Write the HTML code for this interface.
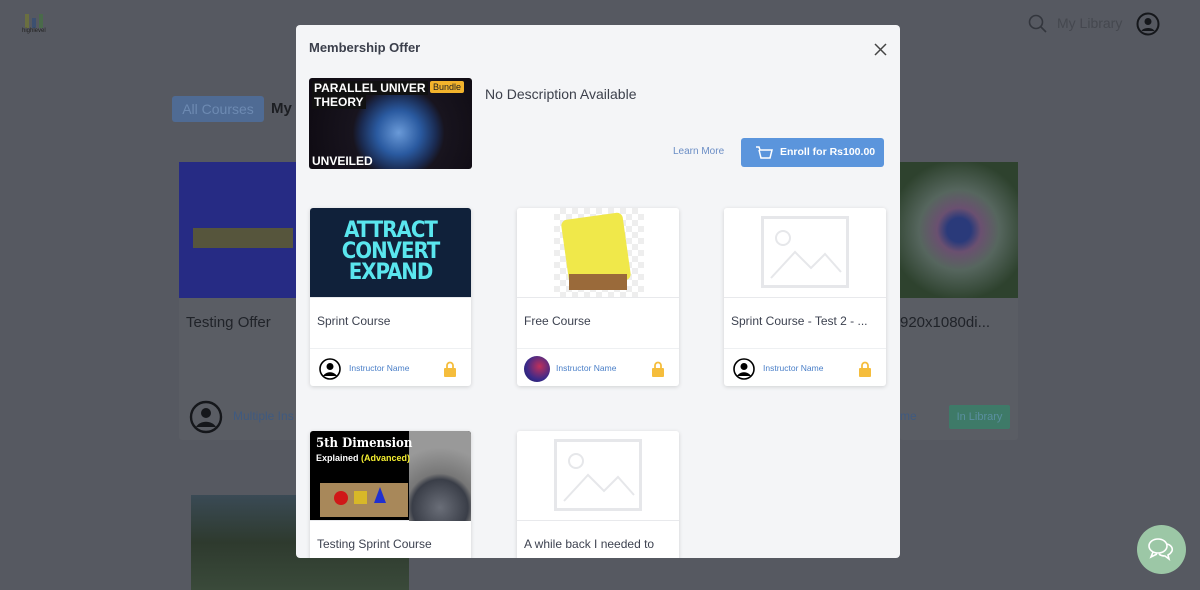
<!DOCTYPE html>
<html><head><style>
*{margin:0;padding:0;box-sizing:border-box}
body{width:1200px;height:590px;overflow:hidden;background:#565961;font-family:"Liberation Sans",sans-serif;position:relative}
.a{position:absolute}
.card{position:absolute;background:#fff;border-radius:3px;box-shadow:0 1px 4px rgba(0,0,0,.15);overflow:hidden}
.card .img{position:absolute;left:0;top:0;width:100%;height:90px;border-bottom:1px solid #e8e9ec}
.card .t{position:absolute;left:7px;top:106px;font-size:12px;color:#3d4250;white-space:nowrap}
.card .hr{position:absolute;left:0;right:0;top:140px;border-top:1px solid #eef0f2}
.card .in{position:absolute;left:39px;top:155px;font-size:8.5px;color:#4a7fc8}
.card .av{position:absolute;left:9px;top:150px;width:22px;height:22px}
.card .lk{position:absolute;right:15px;top:153px}
.ph{position:absolute;left:37px;top:8px;width:88px;height:72px;border:3px solid #e6e7ea}
</style></head><body>
<div class="a" style="left:22px;top:12px;width:26px;height:20px">
<div class="a" style="left:3px;top:2px;width:4px;height:14px;background:#6a6f40"></div>
<div class="a" style="left:10px;top:6px;width:4px;height:10px;background:#3c5070"></div>
<div class="a" style="left:17px;top:2px;width:4px;height:14px;background:#4a6a4a"></div>
</div>
<div class="a" style="left:22px;top:28px;font-size:6px;color:#222">highlevel</div>
<svg class="a" style="left:1028px;top:14px" width="20" height="20" viewBox="0 0 20 20"><circle cx="8" cy="8" r="6.5" fill="none" stroke="#33363d" stroke-width="1.6"/><path d="M13 13l5 5" stroke="#33363d" stroke-width="1.6"/></svg>
<div class="a" style="left:1057px;top:15px;font-size:14px;color:#45484f">My Library</div>
<svg class="a" style="left:1136px;top:12px" width="24" height="24" viewBox="0 0 24 24"><circle cx="12" cy="12" r="10.5" fill="none" stroke="#15171b" stroke-width="2"/><circle cx="12" cy="9.5" r="3.5" fill="#15171b"/><path d="M5.5 19c2-4 11-4 13 0" fill="#15171b"/></svg>
<div class="a" style="left:172px;top:96px;width:92px;height:26px;background:#4f6b94;border-radius:3px;color:#6d8ab2;font-size:14px;line-height:26px;text-align:center">All Courses</div>
<div class="a" style="left:271px;top:100px;font-size:15px;color:#1c1e22;font-weight:bold">My</div>
<div class="a" style="left:179px;top:162px;width:120px;height:278px;background:#5a5d64;border-radius:3px"></div>
<div class="a" style="left:179px;top:162px;width:120px;height:136px;background:#262b84"></div>
<div class="a" style="left:193px;top:228px;width:100px;height:20px;background:#56553c"></div>
<div class="a" style="left:186px;top:314px;font-size:15px;color:#202329">Testing Offer</div>
<svg class="a" style="left:189px;top:400px" width="34" height="34" viewBox="0 0 34 34"><circle cx="17" cy="17" r="15" fill="none" stroke="#15171b" stroke-width="2.4"/><circle cx="17" cy="13" r="5" fill="#15171b"/><path d="M7 27c4-7 16-7 20 0" fill="#15171b"/></svg>
<div class="a" style="left:233px;top:409px;font-size:12px;color:#3f5a80">Multiple Ins</div>
<div class="a" style="left:900px;top:162px;width:118px;height:278px;background:#5a5d64;border-radius:3px"></div>
<div class="a" style="left:900px;top:162px;width:118px;height:136px;background:radial-gradient(circle at 50% 50%,#2a3a7a 0,#2a3a7a 12px,#6a5070 22px,#56665e 40px,#2e422e 70px)"></div>
<div class="a" style="left:900px;top:314px;font-size:15px;color:#202329">920x1080di...</div>
<div class="a" style="left:900px;top:409px;font-size:12px;color:#3f5a80">me</div>
<div class="a" style="left:949px;top:405px;width:61px;height:24px;background:#3e7a68;border-radius:2px;color:#5a8fa0;font-size:11px;line-height:24px;text-align:center">In Library</div>
<div class="a" style="left:191px;top:495px;width:218px;height:95px;background:linear-gradient(#3a4a55,#2e3a2e 50%,#3a4a3a)"></div>
<div class="a" style="left:1137px;top:525px;width:49px;height:49px;border-radius:50%;background:#9cc7a6"></div>
<svg class="a" style="left:1146px;top:535px" width="30" height="30" viewBox="0 0 30 30" fill="none" stroke="#fff" stroke-width="1.6"><ellipse cx="12" cy="11" rx="9" ry="7"/><path d="M7 17l-2 5 6-3"/><path d="M21 9c4 1 6 4 5 7-1 2-2 3-4 4l1 4-4-3c-3 0-5-1-6-2"/></svg>
<div class="a" style="left:296px;top:25px;width:604px;height:533px;background:#f4f5f7;border-radius:4px;overflow:hidden">
<div class="a" style="left:13px;top:15px;font-size:13px;font-weight:bold;color:#3b3f4b">Membership Offer</div>
<svg class="a" style="left:578px;top:18px" width="13" height="13" viewBox="0 0 13 13"><path d="M1 1l11 11M12 1L1 12" stroke="#444" stroke-width="1.5"/></svg>
<div class="a" style="left:13px;top:53px;width:163px;height:91px;border-radius:3px;background:radial-gradient(circle at 55% 60%,#6a9ad8 0,#2a5aa0 22px,#1a2a50 38px,#18141e 46px,#100c14 90px)">
<div class="a" style="left:3px;top:3px;background:#111;color:#fff;font-size:12px;font-weight:bold;padding:0 2px;line-height:14px">PARALLEL UNIVER</div>
<div class="a" style="left:3px;top:17px;background:#111;color:#fff;font-size:12px;font-weight:bold;padding:0 2px;line-height:14px">THEORY</div>
<div class="a" style="left:121px;top:3px;background:#f2b32c;color:#222;font-size:9px;padding:1px 3px;border-radius:2px">Bundle</div>
<div class="a" style="left:3px;top:76px;color:#fff;font-size:12px;font-weight:bold">UNVEILED</div>
</div>
<div class="a" style="left:189px;top:61px;font-size:14px;color:#3d414c">No Description Available</div>
<div class="a" style="left:377px;top:121px;font-size:10px;color:#6a8dc5">Learn More</div>
<div class="a" style="left:445px;top:113px;width:143px;height:29px;background:#5b95dc;border-radius:3px;color:#fff;font-size:10.5px;font-weight:bold;line-height:29px;padding-left:39px">Enroll for Rs100.00</div>
<svg class="a" style="left:459px;top:120px" width="18" height="15" viewBox="0 0 18 15" fill="none" stroke="#fff" stroke-width="1.5"><path d="M1 2h3l1 3h12l-2 8H6L4 5"/></svg>
<div class="card" style="left:14px;top:183px;width:161px;height:178px">
<div class="img" style="background:#10213a"><div style="position:absolute;left:0;right:0;top:12px;text-align:center;color:#5ae6ee;font-size:22px;font-weight:bold;line-height:21px;letter-spacing:-1px;font-family:'DejaVu Sans Condensed','Liberation Sans',sans-serif">ATTRACT<br>CONVERT<br>EXPAND</div></div>
<div class="t">Sprint Course</div><div class="hr"></div>
<svg class="av" viewBox="0 0 22 22"><circle cx="11" cy="11" r="10" fill="#fff" stroke="#000" stroke-width="1.6"/><circle cx="11" cy="8.5" r="3.5"/><path d="M4 18c3-5 11-5 14 0"/></svg>
<div class="in">Instructor Name</div>
<svg class="lk" width="12" height="16" viewBox="0 0 12 16"><path d="M3 7V4.5a3 3 0 016 0V7" fill="none" stroke="#f5bd3c" stroke-width="1.8"/><rect x="0" y="7" width="12" height="9" rx="1" fill="#f5bd3c"/></svg>
</div>
<div class="card" style="left:221px;top:183px;width:162px;height:178px">
<div class="img" style="background:#fff"><div style="position:absolute;left:37px;top:0;width:90px;height:89px;background:repeating-conic-gradient(#eee 0 25%,#fff 0 50%) 0 0/12px 12px"></div><div style="position:absolute;left:48px;top:8px;width:62px;height:68px;background:#f0e84a;border-radius:6px;transform:rotate(-8deg)"></div><div style="position:absolute;left:52px;top:66px;width:58px;height:16px;background:#9a6a3a"></div></div>
<div class="t">Free Course</div><div class="hr"></div>
<div class="av" style="border-radius:50%;background:radial-gradient(circle at 60% 40%,#c0305a,#3a2a8a 60%,#1a1a5a);width:26px;height:26px;left:7px;top:148px"></div>
<div class="in">Instructor Name</div>
<svg class="lk" width="12" height="16" viewBox="0 0 12 16"><path d="M3 7V4.5a3 3 0 016 0V7" fill="none" stroke="#f5bd3c" stroke-width="1.8"/><rect x="0" y="7" width="12" height="9" rx="1" fill="#f5bd3c"/></svg>
</div>
<div class="card" style="left:428px;top:183px;width:162px;height:178px">
<div class="img" style="background:#fff"><div class="ph"></div><svg class="a" style="left:37px;top:8px" width="88" height="72" viewBox="0 0 88 72" fill="none" stroke="#e6e7ea" stroke-width="2"><circle cx="22" cy="22" r="7"/><path d="M10 62l24-26 16 16 14-14 16 18"/></svg></div>
<div class="t">Sprint Course - Test 2 - ...</div><div class="hr"></div>
<svg class="av" viewBox="0 0 22 22"><circle cx="11" cy="11" r="10" fill="#fff" stroke="#000" stroke-width="1.6"/><circle cx="11" cy="8.5" r="3.5"/><path d="M4 18c3-5 11-5 14 0"/></svg>
<div class="in">Instructor Name</div>
<svg class="lk" width="12" height="16" viewBox="0 0 12 16"><path d="M3 7V4.5a3 3 0 016 0V7" fill="none" stroke="#f5bd3c" stroke-width="1.8"/><rect x="0" y="7" width="12" height="9" rx="1" fill="#f5bd3c"/></svg>
</div>
<div class="card" style="left:14px;top:406px;width:161px;height:140px">
<div class="img" style="background:#000"><div style="position:absolute;left:99px;top:0;width:62px;height:90px;background:radial-gradient(circle at 50% 85%,#6a6e78 0,#3a3e48 28px,#777 34px,#999 60px)"></div><div style="position:absolute;left:6px;top:5px;color:#fff;font-size:13px;font-weight:bold;font-family:'DejaVu Serif Condensed',serif">5th Dimension</div><div style="position:absolute;left:6px;top:22px;color:#fff;font-size:9px;font-weight:bold">Explained <span style="color:#f4ee30">(Advanced)</span></div><div style="position:absolute;left:10px;top:52px;width:88px;height:34px;background:#a8885a"></div><div style="position:absolute;left:24px;top:60px;width:14px;height:14px;border-radius:50%;background:#d01818"></div><div style="position:absolute;left:44px;top:60px;width:13px;height:13px;background:#d8b828"></div><div style="position:absolute;left:64px;top:56px;width:0;height:0;border-left:6px solid transparent;border-right:6px solid transparent;border-bottom:16px solid #2030d0"></div></div>
<div class="t">Testing Sprint Course</div>
</div>
<div class="card" style="left:221px;top:406px;width:162px;height:140px">
<div class="img" style="background:#fff"><div class="ph"></div><svg class="a" style="left:37px;top:8px" width="88" height="72" viewBox="0 0 88 72" fill="none" stroke="#e6e7ea" stroke-width="2"><circle cx="22" cy="22" r="7"/><path d="M10 62l24-26 16 16 14-14 16 18"/></svg></div>
<div class="t">A while back I needed to</div>
</div>
</div>
</body></html>
